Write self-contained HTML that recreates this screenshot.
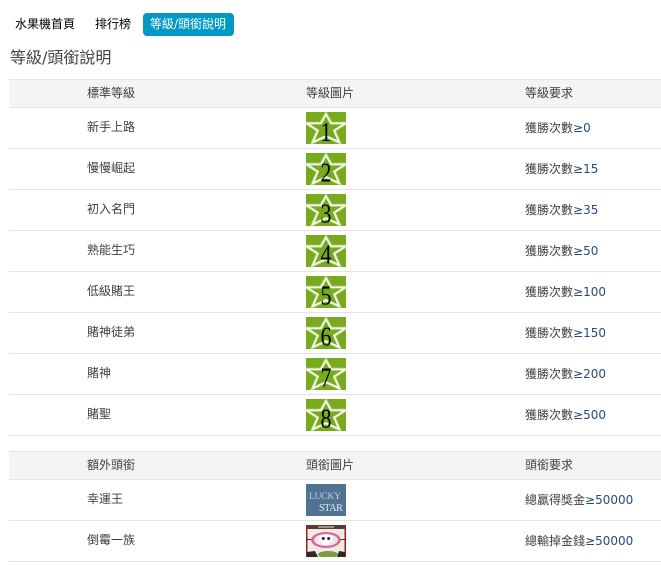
<!DOCTYPE html>
<html>
<head>
<meta charset="utf-8">
<style>
html,body{margin:0;padding:0;background:#fff;width:661px;height:565px;overflow:hidden}
body{position:relative;font-family:"DejaVu Sans","WenQuanYi Zen Hei",sans-serif;font-size:12px;color:#404040}
.t{position:absolute;white-space:nowrap;line-height:16px;height:16px}
.band{position:absolute;left:9px;width:652px;height:27px;background:#f4f4f4;border-top:1px solid #e6e6e6;border-bottom:1px solid #e6e6e6}
.line{position:absolute;left:9px;width:652px;height:1px;background:#e6e6e0}
.img{position:absolute;left:306px;width:40px;height:32px;overflow:hidden;display:block}
.n{font-family:"Liberation Serif",serif;font-size:22px;fill:#000}
</style>
</head>
<body>
<svg width="0" height="0" style="position:absolute"><defs>
<g id="s">
<rect width="40" height="32" fill="#78aa1e"/>
<polygon points="20,2.5 25,11.5 39,11.5 28,18.5 33,30 20,24 7,30 12,18.5 1,11.5 15,11.5" fill="none" stroke="#b9d68c" stroke-width="3.4"/>
<polygon points="20,2.5 25,11.5 39,11.5 28,18.5 33,30 20,24 7,30 12,18.5 1,11.5 15,11.5" fill="#78aa1e" stroke="#f6faee" stroke-width="1.8"/>
</g>
</defs></svg>
<div class="t" style="left:15px;top:16px;color:#000">水果機首頁</div>
<div class="t" style="left:95px;top:16px;color:#000">排行榜</div>
<div style="position:absolute;left:143px;top:13px;width:91px;height:23px;border-radius:4px;background:#0099c6"></div>
<div class="t" style="left:150px;top:16px;color:#fff">等級/頭銜說明</div>
<div class="t" style="left:10px;top:50px;font-size:16px;line-height:16px;color:#444">等級/頭銜說明</div>

<div class="band" style="top:79px"></div>
<div class="t" style="left:87px;top:85px">標準等級</div>
<div class="t" style="left:306px;top:85px">等級圖片</div>
<div class="t" style="left:525px;top:85px">等級要求</div>

<div class="t" style="left:87px;top:119px">新手上路</div>
<div class="t" style="left:525px;top:120px">獲勝次數<span style="color:#2a4a75">≥0</span></div>
<div class="line" style="top:148px"></div>
<div class="t" style="left:87px;top:160px">慢慢崛起</div>
<div class="t" style="left:525px;top:161px">獲勝次數<span style="color:#2a4a75">≥15</span></div>
<div class="line" style="top:189px"></div>
<div class="t" style="left:87px;top:201px">初入名門</div>
<div class="t" style="left:525px;top:202px">獲勝次數<span style="color:#2a4a75">≥35</span></div>
<div class="line" style="top:230px"></div>
<div class="t" style="left:87px;top:242px">熟能生巧</div>
<div class="t" style="left:525px;top:243px">獲勝次數<span style="color:#2a4a75">≥50</span></div>
<div class="line" style="top:271px"></div>
<div class="t" style="left:87px;top:283px">低級賭王</div>
<div class="t" style="left:525px;top:284px">獲勝次數<span style="color:#2a4a75">≥100</span></div>
<div class="line" style="top:312px"></div>
<div class="t" style="left:87px;top:324px">賭神徒弟</div>
<div class="t" style="left:525px;top:325px">獲勝次數<span style="color:#2a4a75">≥150</span></div>
<div class="line" style="top:353px"></div>
<div class="t" style="left:87px;top:365px">賭神</div>
<div class="t" style="left:525px;top:366px">獲勝次數<span style="color:#2a4a75">≥200</span></div>
<div class="line" style="top:394px"></div>
<div class="t" style="left:87px;top:406px">賭聖</div>
<div class="t" style="left:525px;top:407px">獲勝次數<span style="color:#2a4a75">≥500</span></div>
<div class="line" style="top:435px"></div>

<svg class="img" style="top:112px" viewBox="0 0 40 32"><use href="#s"/><text class="n" transform="translate(20 29) scale(1 1.25)" text-anchor="middle">1</text></svg>
<svg class="img" style="top:153px" viewBox="0 0 40 32"><use href="#s"/><text class="n" transform="translate(20 28.5) scale(1 1.25)" text-anchor="middle">2</text></svg>
<svg class="img" style="top:194px" viewBox="0 0 40 32"><use href="#s"/><text class="n" transform="translate(20 28.5) scale(1 1.25)" text-anchor="middle">3</text></svg>
<svg class="img" style="top:235px" viewBox="0 0 40 32"><use href="#s"/><text class="n" transform="translate(20 28.5) scale(1 1.25)" text-anchor="middle">4</text></svg>
<svg class="img" style="top:276px" viewBox="0 0 40 32"><use href="#s"/><text class="n" transform="translate(20 28.5) scale(1 1.25)" text-anchor="middle">5</text></svg>
<svg class="img" style="top:317px" viewBox="0 0 40 32"><use href="#s"/><text class="n" transform="translate(20 28.5) scale(1 1.25)" text-anchor="middle">6</text></svg>
<svg class="img" style="top:358px" viewBox="0 0 40 32"><use href="#s"/><text class="n" transform="translate(20 28.5) scale(1 1.25)" text-anchor="middle">7</text></svg>
<svg class="img" style="top:399px" viewBox="0 0 40 32"><use href="#s"/><text class="n" transform="translate(20 28.5) scale(1 1.25)" text-anchor="middle">8</text></svg>

<div class="band" style="top:451px"></div>
<div class="t" style="left:87px;top:457px">額外頭銜</div>
<div class="t" style="left:306px;top:457px">頭銜圖片</div>
<div class="t" style="left:525px;top:457px">頭銜要求</div>
<div class="t" style="left:87px;top:491px">幸運王</div>
<div class="t" style="left:525px;top:492px">總贏得獎金<span style="color:#2a4a75">≥50000</span></div>
<div class="line" style="top:520px"></div>
<div class="t" style="left:87px;top:532px">倒霉一族</div>
<div class="t" style="left:525px;top:533px">總輸掉金錢<span style="color:#2a4a75">≥50000</span></div>
<div class="line" style="top:561px"></div>

<svg class="img" style="top:484px" viewBox="0 0 40 32">
<rect width="40" height="32" fill="#507394"/>
<text x="3" y="15" font-family="Liberation Serif,serif" font-size="9.5" textLength="32" fill="#c3d1dc">LUCKY</text>
<text x="13" y="27" font-family="Liberation Serif,serif" font-size="10.5" textLength="24" fill="#dbe4ea">STAR</text>
</svg>
<svg class="img" style="top:525px" viewBox="0 0 40 32">
<rect width="40" height="32" fill="#f0ebe2"/>
<rect width="40" height="4" fill="#5a3a34"/>
<rect x="12" y="1" width="16" height="2" fill="#a09086"/>
<rect y="0" width="1.5" height="32" fill="#9a2020"/><rect x="38.5" y="0" width="1.5" height="32" fill="#9a2020"/>
<rect x="0" y="14" width="40" height="1" fill="#333"/>
<ellipse cx="20" cy="15" rx="15" ry="8" fill="#d9689a"/>
<ellipse cx="20" cy="15" rx="12" ry="5.8" fill="#efe6ea"/>
<ellipse cx="20" cy="13.5" rx="7" ry="4.5" fill="#fff"/>
<rect x="16" y="16" width="8" height="4" fill="#fff"/>
<circle cx="17.3" cy="13.5" r="1.5" fill="#222"/><circle cx="22.7" cy="13.5" r="1.5" fill="#222"/>
<path d="M1 32 L1 27 L9 26 L12 32 Z M39 32 L39 27 L33 26 L31 32 Z" fill="#2a2a24"/>
<ellipse cx="22" cy="29.5" rx="10" ry="3.5" fill="#7d9a3f"/>
</svg>
</body>
</html>
